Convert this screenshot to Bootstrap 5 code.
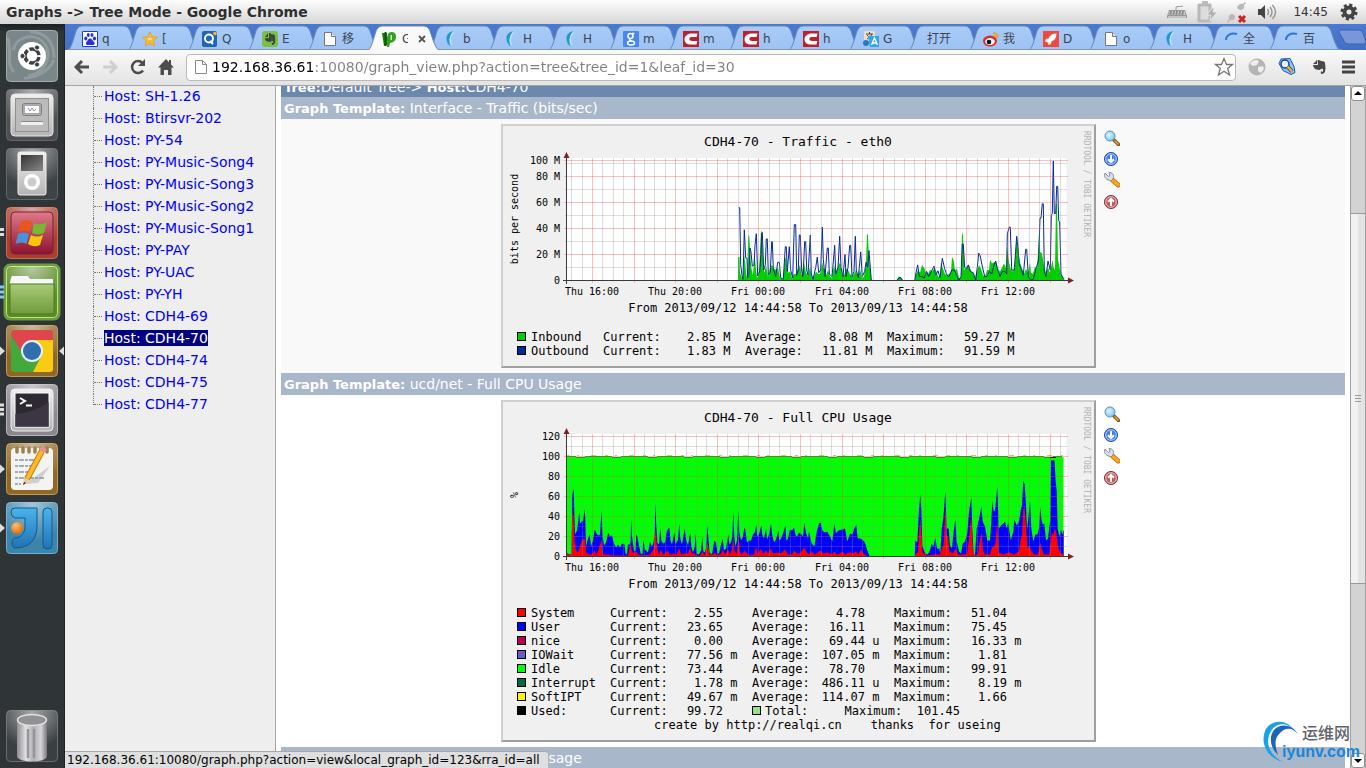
<!DOCTYPE html>
<html lang="en">
<head>
<meta charset="utf-8">
<meta name="viewport" content="width=device-width, initial-scale=1">
<title>Graphs -> Tree Mode</title>
<link href="https://cdn.jsdelivr.net/npm/bootstrap@5.3.0/dist/css/bootstrap.min.css" rel="stylesheet">
<script src="https://cdn.jsdelivr.net/npm/bootstrap@5.3.0/dist/js/bootstrap.bundle.min.js"></script>
<style>
  body { font-family: "DejaVu Sans", "Noto Sans CJK SC", sans-serif; font-size: 14px; line-height: 22px; color: #000; }
  button { border: 0; padding: 0; background: none; }
  svg { display: block; flex: none; }

  .desk-panel { height: 24px; background: linear-gradient(#fdfdfd, #d6d6d6); color: #333; padding: 0 8px 0 6px; }
  .desk-panel h1 { font-size: 14px; line-height: 23px; font-weight: 700; color: #2f2f2f; }
  .clock { font-size: 12px; line-height: 24px; }

  .launcher { width: 65px; background: linear-gradient(#1c2022, #2f3537 8px, #2f3537); border-right: 1px solid #1f2324; padding: 6px 0; gap: 7px; }

  .tab-strip { height: 26px; background: linear-gradient(#4a7ad0, #4470c4); padding-left: 2px; }
  .page-tab { position: relative; flex: 0 0 60px; height: 26px; padding: 3px 0 0 15px; gap: 4px; font-size: 12px; line-height: 22px; color: #3c4450; text-align: left; }
  .page-tab .tab-shape { position: absolute; left: 0; top: 0; z-index: 0; }
  .page-tab .tab-icon, .page-tab .tab-title, .page-tab .tab-close { position: relative; z-index: 2; }
  .tab-title { width: 12px; overflow: hidden; white-space: nowrap; }
  .tab-title.wide { width: 26px; }
  .tab-title.narrow { width: 6px; }
  .page-tab.active { z-index: 3; }

  .tool-bar { height: 36px; background: linear-gradient(#f9f9f9, #e3e3e3); border-bottom: 1px solid #a3a3a3; padding: 0 10px 0 9px; gap: 12px; }
  .omnibox { height: 27px; border: 1px solid #b9b9b9; border-radius: 4px; background: #fff; padding: 0 1px 0 7px; }
  .omnibox input { border: 0; outline: 0; padding: 0; font-size: 14px; line-height: 25px; color: transparent; background: linear-gradient(90deg, #000 103px, #808080 103px); -webkit-background-clip: text; background-clip: text; }

  .tree-pane { width: 211px; background: #eee; border-right: 1px solid #a5a5a5; padding-left: 28px; }
  .tree-pane li { height: 22px; line-height: 20px; padding-left: 11px; position: relative; }
  .tree-pane li::before { content: ""; position: absolute; left: 0; top: 0; bottom: 0; border-left: 1px dotted #777; }
  .tree-pane li:last-child::before { bottom: 11px; }
  .tree-pane li::after { content: ""; position: absolute; left: 1px; top: 10px; width: 8px; border-top: 1px dotted #777; }
  .tree-pane a { color: #00f; text-decoration: none; font-size: 14px; }
  .tree-pane a.picked { background: #000080; color: #fff; }

  .graph-pane { background: #fff; padding: 0 5px; }
  .bar-tree { height: 11px; background: #6d88ad; color: #fff; overflow: hidden; }
  .bar-tree div { height: 22px; line-height: 22px; margin-top: -10px; }
  .bar-template { height: 22px; background: #a9b7cb; color: #fff; line-height: 23px; }
  .bar-tree, .bar-template { padding: 0 3px; font-size: 14px; white-space: nowrap; }
  .bar-tree b, .bar-template b { font-size: 13px; }
  .graph-row { padding: 5px 0; }
  .graph-row.shade { background: #f9f9f9; }
  .rrd { width: 595px; background: #f0f0f0; border: 2px solid; border-color: #cfcfcf #9f9f9f #9f9f9f #cfcfcf; padding-bottom: 8px; }
  .rrd text { font-family: "DejaVu Sans Mono", monospace; fill: #000; }
  .t-title { font-size: 13px; }
  .t-span { font-size: 12px; }
  .t-axis { font-size: 10px; }
  .t-mark { font-size: 8px; }
  .rrd .t-mark { fill: #b2b2b2; }
  .key-table { font-family: "DejaVu Sans Mono", monospace; font-size: 12px; line-height: 14px; margin-left: 14px; table-layout: fixed; white-space: pre; color: #000; }
  .key-table td, .key-table th { padding: 0; height: 14px; font-weight: 400; }
  .credit { padding-left: 137px; }
  .swatch { display: block; width: 9px; height: 9px; border: 1px solid #000; }
  .w-sw { width: 14px; } .w-nm { width: 72px; } .w-nm2 { width: 79px; } .w-cap { width: 63px; } .w-num { width: 50px; } .w-unit { width: 29px; }
  .graph-tools { width: 29px; padding: 6px 5px 0 8px; gap: 5px; }

  .scroll-rail { width: 16px; background: #d3d3d3; border-left: 1px solid #a0a0a0; border-right: 1px solid #a0a0a0; }
  .scroll-rail button { height: 15px; background: #fff; border: 1px solid #8f8f8f; border-radius: 3px; display: flex; align-items: center; justify-content: center; }
  .rail-top { flex: 112 0 0; } .rail-thumb { flex: 370 0 0; background: linear-gradient(90deg, #f1f1f1 50%, #e3e3e3 50%); border-top: 1px solid #999; border-bottom: 1px solid #999; } .rail-end { flex: 170 0 0; }

  .status-bubble { position: absolute; left: 0; bottom: 0; height: 17px; background: #dfdfdf; border-top: 1px solid #a8a8a8; border-right: 1px solid #b5b5b5; border-radius: 0 4px 0 0; padding: 0 8px 0 2px; font-size: 12px; line-height: 16px; white-space: nowrap; }
  .site-mark { position: absolute; right: 6px; bottom: 3px; width: 98px; height: 46px; }
  .site-mark .cn { position: absolute; right: 10px; top: 3px; font: 500 16px/20px "Noto Sans CJK SC", sans-serif; color: #62646c; }
  .site-mark .en { position: absolute; right: 0; bottom: 3px; font: 700 16px/20px "Liberation Sans", sans-serif; color: #1787d8; }
</style>
</head>
<body class="vh-100 overflow-hidden d-flex flex-column">

<svg width="0" height="0" class="position-absolute" aria-hidden="true">
  <defs>
    <linearGradient id="gTab" x1="0" y1="0" x2="0" y2="1"><stop offset="0" stop-color="#a9cbf7"/><stop offset="1" stop-color="#9dc3f4"/></linearGradient>
    <radialGradient id="gGloss" cx=".5" cy="0" r=".75"><stop offset="0" stop-color="#fff" stop-opacity=".55"/><stop offset="1" stop-color="#fff" stop-opacity="0"/></radialGradient>
    <linearGradient id="gSilver" x1="0" y1="0" x2="0" y2="1"><stop offset="0" stop-color="#efefef"/><stop offset="1" stop-color="#b4b4b4"/></linearGradient>
    <linearGradient id="gScreen" x1="0" y1="0" x2="1" y2="1"><stop offset="0" stop-color="#333"/><stop offset="1" stop-color="#888"/></linearGradient>
    <linearGradient id="gCrim" x1="0" y1="0" x2="0" y2="1"><stop offset="0" stop-color="#e07a8a"/><stop offset="1" stop-color="#8d1230"/></linearGradient>
    <linearGradient id="gFold" x1="0" y1="0" x2="0" y2="1"><stop offset="0" stop-color="#a9cc77"/><stop offset="1" stop-color="#6f9a3c"/></linearGradient>
    <linearGradient id="gTube" x1="0" y1="0" x2="1" y2="0"><stop offset="0" stop-color="#8d8d92"/><stop offset=".3" stop-color="#e2e2e4"/><stop offset=".55" stop-color="#b0b0b4"/><stop offset=".8" stop-color="#d5d5d8"/><stop offset="1" stop-color="#77777d"/></linearGradient>
    <linearGradient id="gJI" x1="0" y1="0" x2="0" y2="1"><stop offset="0" stop-color="#4ab4ec"/><stop offset="1" stop-color="#2272b4"/></linearGradient>
    <radialGradient id="gOr" cx=".4" cy=".3" r=".7"><stop offset="0" stop-color="#ffc27a"/><stop offset="1" stop-color="#e06c00"/></radialGradient>
    <radialGradient id="gLens" cx=".4" cy=".4" r=".7"><stop offset="0" stop-color="#e4f8ff"/><stop offset="1" stop-color="#6fbdec"/></radialGradient>
    <g id="tile"><rect x="6.500" y=".5" width="51" height="51" rx="4"/></g>
    <g id="oneArrow"><path d="M0 21.500l5 4.500-5 4.500z" fill="#ddd"/></g>
    <g id="twoDots"><path d="M0 22.500h4M0 27.500h4" stroke="#ddd" stroke-width="3"/></g>
    <g id="icoPage"><path d="M2.500 1.500h7l4 4v9h-11z" fill="#fff" stroke="#777"/><path d="M9.500 1.500v4h4" fill="#eee" stroke="#777"/></g>
    <g id="icoFish"><path d="M10 0C6 1 3 4 3.500 8c0 3 1.500 5 4 7.500C6.500 12 5.500 9 7 6c.8-3 1.500-4 3-6z" fill="#1c98d4"/><path d="M10.500 1.500C7 5 6.500 9 8.500 14" stroke="#c8f0ff" fill="none"/></g>
    <g id="icoC"><path d="M0 0h16v16H0z" fill="#c1202b"/><path d="M14.500 2.500H9C4.500 2.500 1.500 5 1.500 8.200c0 3.300 2.500 5.300 6.500 5.300h5.500l.8-3.500H9.300c-2 0-3-.8-3-2 0-1.400 1.200-2 3-2h4.400z" fill="#fff"/></g>
    <g id="icoSpin"><path d="M3 9C3 4 8 1.500 14 3" stroke="#2b77d8" stroke-width="2" fill="none"/></g>
    <g id="toolZoom"><path d="M10 10l4.500 4.500" stroke="#8a5514" stroke-width="3.500" stroke-linecap="round"/><path d="M10.500 10.500l4 4" stroke="#f0a63c" stroke-width="1.500"/><circle cx="6" cy="6" r="5" fill="url(#gLens)" stroke="#5b93b8"/></g>
    <g id="toolDown"><circle cx="7" cy="8" r="6.500" fill="#3f7fee" stroke="#1f3fa8"/><circle cx="7" cy="8" r="5.300" fill="none" stroke="#bcd4ff"/><path d="M7 4v7M4 8.200l3 3 3-3" stroke="#fff" stroke-width="2" fill="none"/></g>
    <g id="toolWrench"><path d="M9 8.500l5 4.500" stroke="#b86a00" stroke-width="5" stroke-linecap="round"/><path d="M9 8.500l5 4.500" stroke="#ffa41c" stroke-width="3.500" stroke-linecap="round"/><path d="M1 1l3.500 3.500L6 3.500 5 .5c3 0 5 2 4.500 5L8 8.500C4 9 .5 6 .5 3.500z" fill="#dcdfe8" stroke="#85899b"/></g>
    <g id="toolUp"><circle cx="7" cy="9" r="6.500" fill="#c25a5c" stroke="#7d2d31"/><circle cx="7" cy="9" r="5.300" fill="none" stroke="#eec5c5"/><path d="M7 13V6M4 8.800l3-3 3 3" stroke="#fff" stroke-width="2" fill="none"/></g>
  </defs>
</svg>

<header class="desk-panel d-flex align-items-center">
  <h1 class="m-0">Graphs -&gt; Tree Mode - Google Chrome</h1>
  <div class="ms-auto d-flex align-items-center">
    <svg width="20" height="20" class="me-2"><path d="M9 8V5M9 5c3-1 4 0 7-1" stroke="#999" fill="none"/><path d="M2 8h16l2 6v2H0v-2z" fill="#999"/><path d="M2.500 9h15l1 4h-17z" fill="#ccc"/><path d="M3 10h14M2.500 12h15" stroke="#555" stroke-dasharray="2 1"/><path d="M1 15h18" stroke="#eee"/></svg>
    <svg width="22" height="24" class="me-2"><path d="M7 1h6v3h-6z" fill="#bbb"/><path d="M4 5h11v16H4z" fill="#dcdcdc" stroke="#b8b8b8" stroke-width="3" stroke-linejoin="round"/><path d="M17 8l-5 7h4l-1 6 7-9h-4l1-4z" fill="#b0b0b0" stroke="#eee" stroke-width=".8"/></svg>
    <svg width="24" height="24" class="me-2"><path d="M12 8c1-4 4-5 6-4l2-2 1 1-2 2c1 3-1 5-4 5z" fill="#b8b8b8"/><path d="M2 22l2-3c-1-3 1-5 4-5l2 2c0 4-2 5-5 4l-2 3z" fill="#b8b8b8"/><path d="M14 16l6 6M20 16l-6 6" stroke="#c22" stroke-width="3"/></svg>
    <svg width="20" height="20" class="me-2"><path d="M1 7h3l4-4v14l-4-4H1z" fill="#444"/><path d="M10.500 7q2 3 0 6M13 5q4 5 0 10M15.500 3q6 7 0 14" stroke="#999" stroke-width="1.500" fill="none"/></svg>
    <span class="clock mx-2">14:45</span>
    <svg width="18" height="18" class="ms-1"><circle cx="9" cy="9" r="7" fill="none" stroke="#444" stroke-width="3" stroke-dasharray="3 2.500"/><circle cx="9" cy="9" r="4.500" fill="none" stroke="#444" stroke-width="4"/></svg>
  </div>
</header>

<div class="d-flex flex-fill" style="min-height:0">
  <nav class="launcher d-flex flex-column flex-shrink-0" aria-label="Launcher">
    <button aria-label="Dash"><svg width="64" height="52"><g fill="#7b868a" stroke="#a3abae"><use href="#tile"/></g><path d="M13 20C18 4 38 2 46 16c6 12-2 28-18 30M8 8c4 18-2 26 6 34M54 30c-6 12-18 18-30 18M30 2c16 0 24 10 24 26" stroke="#b4bcbf" stroke-width="3" fill="none" opacity=".4"/><circle cx="32" cy="26" r="14" fill="#fff"/><circle cx="32" cy="26" r="7" fill="none" stroke="#3b4144" stroke-width="3.500" stroke-dasharray="12.600 2" stroke-dashoffset="-1"/><g fill="#3b4144" stroke="#fff"><circle cx="22.500" cy="26" r="2.600"/><circle cx="37" cy="17.500" r="2.600"/><circle cx="37" cy="34.500" r="2.600"/></g></svg></button>
    <button aria-label="Files"><svg width="64" height="52"><g fill="#4b4f51" stroke="#666"><use href="#tile"/></g><use href="#tile" fill="url(#gGloss)"/><rect x="11" y="5" width="42" height="42" rx="4" fill="url(#gSilver)" stroke="#e8e8e8"/><rect x="15.500" y="9.500" width="33" height="33" fill="#bbb" stroke="#909090"/><rect x="22.500" y="14.500" width="19" height="12" rx="2" fill="#aaa" stroke="#808080"/><path d="M25 17h14v7H25z" fill="#fff"/><path d="M28 19l2 3 2-3 2 3 2-2" stroke="#7d93b2" fill="none"/><path d="M21 34.500h22" stroke="#eee" stroke-width="3"/><path d="M21 32.500h22" stroke="#888"/></svg></button>
    <button aria-label="Music player"><svg width="64" height="52"><g fill="#3e4345" stroke="#666"><use href="#tile"/></g><use href="#tile" fill="url(#gGloss)"/><rect x="18" y="4" width="28" height="43" rx="2" fill="url(#gSilver)" stroke="#eee"/><path d="M21 7h22v16H21z" fill="url(#gScreen)"/><circle cx="32" cy="34" r="8" fill="#fff"/><circle cx="32" cy="34" r="4.500" fill="#ccc"/></svg></button>
    <button aria-label="Windows"><svg width="64" height="52"><g fill="#a8402f" stroke="#c86b5a"><use href="#tile"/></g><use href="#tile" fill="url(#gGloss)"/><use href="#twoDots"/><rect x="11" y="5" width="42" height="42" rx="4" fill="url(#gCrim)" stroke="#7a2030"/><path d="M21 15q5-4 11 0l-2.500 10q-6-3-11 0z" fill="#e8561c"/><path d="M34 16q6 3 13-1l-3 11q-6 3-12 0z" fill="#7ab72c"/><path d="M18 27q6-3 11 0l-2.500 10q-5-3-11 0z" fill="#4b93d8"/><path d="M31 28q6 3 12 0l-3 10q-6 3-12-1z" fill="#fcc40e"/></svg></button>
    <button aria-label="Home folder"><svg width="64" height="52" overflow="visible"><rect x="5" y="-1" width="54" height="54" rx="5" fill="none" stroke="#9be04a" stroke-width="3" opacity=".6"/><g fill="#5c8a2c" stroke="#b6f068"><use href="#tile"/></g><use href="#tile" fill="url(#gGloss)"/><path d="M0 21h4M0 26h4M0 31h4" stroke="#7fc8ee" stroke-width="3"/><path d="M11 12l1-2h16l2 3h23v9H10v-6z" fill="#f6f6f6"/><path d="M10 18h44v30H10z" fill="url(#gFold)" stroke="#4f7a22"/></svg></button>
    <button aria-label="Chrome"><svg width="64" height="52"><g fill="#8f6826" stroke="#c29a52"><use href="#tile"/></g><use href="#tile" fill="url(#gGloss)"/><use href="#oneArrow"/><path d="M64 21.500l-5 4.500 5 4.500z" fill="#ddd"/><rect x="11" y="5" width="42" height="42" rx="4" fill="#45a83c"/><path d="M14 5h36q3 0 3 3v8H32l-11 10L11 10q0-5 3-5z" fill="#e0444c"/><path d="M30 15h23v29q0 3-3 3H33l9-17z" fill="#f9cb12"/><circle cx="32" cy="26" r="11" fill="#eaf0f4"/><circle cx="32" cy="26" r="9" fill="#2f6fae"/></svg></button>
    <button aria-label="Terminal"><svg width="64" height="52"><g fill="#8b878f" stroke="#b8b4bc"><use href="#tile"/></g><use href="#tile" fill="url(#gGloss)"/><path d="M0 21h4M0 25.500h4M0 30h4" stroke="#ddd" stroke-width="3"/><rect x="11" y="5" width="42" height="42" rx="4" fill="url(#gSilver)" stroke="#eee"/><path d="M15 9h34v34H15z" fill="#2c2a30" stroke="#fff"/><path d="M15 30q20-2 34-12v25H15z" fill="#413c48" opacity=".7"/><path d="M20 14l5 3-5 3M26 21.500h6" stroke="#fff" stroke-width="2" fill="none"/></svg></button>
    <button aria-label="Text editor"><svg width="64" height="52"><g fill="#8f6826" stroke="#c29a52"><use href="#tile"/></g><use href="#tile" fill="url(#gGloss)"/><use href="#oneArrow"/><rect x="11" y="5" width="42" height="42" rx="4" fill="#f3f3f1"/><path d="M17 5v4M23 5v4M29 5v4M35 5v4M41 5v4M47 5v4" stroke="#9b8150" stroke-width="3.500" stroke-linecap="round"/><path d="M15 17h22M15 23h19M15 29h16M15 35h30M15 41h6" stroke="#8496ae" stroke-width="1.500" stroke-dasharray="3 1 5 1"/><path d="M25 41l25-18-12 17z" fill="#999" opacity=".4"/><path d="M27 36L42 8" stroke="#c77a06" stroke-width="6"/><path d="M27 36L42 8" stroke="#fbb92e" stroke-width="4"/><path d="M42 8l2-3.500" stroke="#e78e9a" stroke-width="6"/><path d="M24 35l6 3-7 4z" fill="#eac99a"/><path d="M23 42l1-3 2 1z" fill="#222"/></svg></button>
    <button aria-label="IntelliJ IDEA"><svg width="64" height="52"><g fill="#3d84ab" stroke="#6fb2d6"><use href="#tile"/></g><use href="#tile" fill="url(#gGloss)"/><use href="#oneArrow"/><path d="M11 10q0-4 4-4h22v18c0 14-8 22-22 22-4 0-4-10 0-10 6 0 10-5 10-12v-8H15q-4-1-4-6z" fill="url(#gJI)" stroke="#0d5a8c"/><rect x="43" y="6" width="9" height="41" rx="4" fill="url(#gJI)" stroke="#0d5a8c"/><circle cx="17" cy="26" r="6" fill="url(#gOr)"/></svg></button>
    <button class="mt-auto" aria-label="Trash"><svg width="64" height="52"><g fill="#3a3f41" stroke="#6c6c6c"><use href="#tile"/></g><use href="#tile" fill="url(#gGloss)"/><path d="M17 10v37c3 6 27 6 30 0V10z" fill="url(#gTube)"/><path d="M28 19v29M34 19v29" stroke="#95959b" stroke-width="2.500"/><ellipse cx="32" cy="10" rx="14.500" ry="5.500" fill="#929295" stroke="#e4e4e6" stroke-width="1.500"/></svg></button>
  </nav>

  <main class="d-flex flex-column flex-fill position-relative" style="min-width:0">
    <div class="tab-strip d-flex" id="tabs" role="tablist"></div>

    <div class="tool-bar d-flex align-items-center">
      <button aria-label="Back"><svg width="16" height="16"><path d="M15 8H3M8 2L2 8l6 6" stroke="#4d4d4d" stroke-width="3" fill="none"/></svg></button>
      <button aria-label="Forward"><svg width="16" height="16"><path d="M1 8h12M8 2l6 6-6 6" stroke="#cfcfcf" stroke-width="3" fill="none"/></svg></button>
      <button aria-label="Reload"><svg width="16" height="16"><path d="M13 11.500A6 6 0 1 1 12.500 4" stroke="#4d4d4d" stroke-width="2.500" fill="none"/><path d="M15 0v7H8z" fill="#4d4d4d"/></svg></button>
      <button aria-label="Home"><svg width="16" height="16"><path d="M8 0L0 8.500h2.500V16H6v-5h4v5h3.500V8.500H16l-3-3V1h-2v2.300z" fill="#4d4d4d"/></svg></button>
      <div class="omnibox d-flex align-items-center flex-fill">
        <svg width="14" height="16" class="me-1"><path d="M1.500 1.500h7l4 4v9h-11z" fill="#fff" stroke="#888"/><path d="M8.500 1.500v4h4" fill="none" stroke="#888"/></svg>
        <input class="flex-fill" aria-label="Address" value="192.168.36.61:10080/graph_view.php?action=tree&amp;tree_id=1&amp;leaf_id=30">
        <button aria-label="Bookmark"><svg width="20" height="20"><path d="M10 1.500l2.500 6H18.500l-4.800 4 1.900 6.500L10 14.300 4.400 18l1.900-6.500-4.800-4h6z" fill="#fff" stroke="#777" stroke-width="1.300"/></svg></button>
      </div>
      <button aria-label="Proxy"><svg width="18" height="18"><circle cx="9" cy="9" r="8.500" fill="#b5b5b5"/><path d="M4 3q4-2 7 0l-2 4-4 1-3-2zM10 9l5-1 1 3-3 4-3-2z" fill="#eee"/></svg></button>
      <button aria-label="Inspector"><svg width="18" height="18"><path d="M3 1l9-.5 4 8 1 6-4 2-8-4-4-7z" fill="#8cc4f6" stroke="#2257a8"/><circle cx="7" cy="6" r="4" fill="#dff2ff" stroke="#1f3f90" stroke-width="1.500"/><path d="M9.500 8.500l4.500 5" stroke="#1f3f90" stroke-width="4"/><path d="M9.500 8.500l4.500 5" stroke="#f2b12c" stroke-width="2.500"/></svg></button>
      <button aria-label="Evernote" class="mx-1"><svg width="14" height="16"><path d="M1 5l4-4v4zM5.500 1q3 0 3.500 1 4 0 4 2 1 5 0 9-1 2-4 2-1-4 2-2V10q-2-1-3 1-3 0-5-1-2-2-2-4h5z" fill="#4a4a4a"/></svg></button>
      <button aria-label="Menu"><svg width="14" height="14"><path d="M0 2h13M0 7h13M0 12h13" stroke="#444" stroke-width="3"/></svg></button>
    </div>

    <div class="d-flex flex-fill overflow-hidden">
      <ul class="tree-pane list-unstyled m-0 flex-shrink-0" id="tree"></ul>

      <section class="graph-pane flex-fill overflow-hidden">
        <div class="bar-tree"><div><b>Tree:</b>Default Tree-&gt; <b>Host:</b>CDH4-70</div></div>
        <div class="bar-template"><b>Graph Template:</b> Interface - Traffic (bits/sec)</div>
        <div class="graph-row shade d-flex justify-content-center">
          <figure class="rrd m-0">
            <svg id="plotTraffic" width="591" height="204" role="img" aria-label="CDH4-70 traffic on eth0"></svg>
            <table class="key-table" id="keyTraffic"></table>
          </figure>
          <div class="graph-tools d-flex flex-column"></div>
        </div>
        <div class="bar-template"><b>Graph Template:</b> ucd/net - Full CPU Usage</div>
        <div class="graph-row d-flex justify-content-center">
          <figure class="rrd m-0">
            <svg id="plotCpu" width="591" height="204" role="img" aria-label="CDH4-70 CPU usage"></svg>
            <table class="key-table" id="keyCpu"></table>
          </figure>
          <div class="graph-tools d-flex flex-column"></div>
        </div>
        <div class="bar-template"><b>Graph Template:</b> ucd/net - Memory Usage</div>
      </section>

      <div class="scroll-rail d-flex flex-column flex-shrink-0" aria-label="Scroll bar">
        <button aria-label="Scroll up"><svg width="8" height="4"><path d="M0 4l4-4 4 4z"/></svg></button>
        <div class="rail-top"></div>
        <div class="rail-thumb d-flex align-items-center justify-content-center"><svg width="6" height="7"><path d="M0 .5h6M0 3.500h6M0 6.500h6" stroke="#999"/></svg></div>
        <div class="rail-end"></div>
        <button aria-label="Scroll down"><svg width="8" height="4"><path d="M0 0l4 4 4-4z"/></svg></button>
      </div>
    </div>

    <div class="status-bubble">192.168.36.61:10080/graph.php?action=view&amp;local_graph_id=123&amp;rra_id=all</div>
    <div class="site-mark">
      <svg width="98" height="46"><path d="M33 13C26-1 8 0 3 12c-5 13 3 28 19 31C8 37 3 25 8 14 13 3 26 2 33 13z" fill="#18a0e8"/><path d="M36 15C30 5 18 4 12 11c-6 8-3 18 4 25-3-9-4-16 1-21 6-7 13-7 19 0z" fill="#1a66b8"/></svg>
      <span class="cn">运维网</span><span class="en">iyunv.com</span>
    </div>
  </main>
</div>

<script>
/* ---- browser tabs ---- */
const icons = {
  paw: '<path d="M0 0h16v16H0z" fill="#fff"/><path d="M.5.5h15v15H.5z" fill="none" stroke="#2932e1"/><g fill="#2932e1"><ellipse cx="3.800" cy="7.500" rx="1.600" ry="2"/><ellipse cx="6.300" cy="4" rx="1.500" ry="2"/><ellipse cx="10" cy="4" rx="1.500" ry="2"/><ellipse cx="12.500" cy="7.500" rx="1.600" ry="2"/><path d="M8 7.500c2 0 2.500 2 4 3.500s.5 3-1.500 3-4 .1-5 0-2.500-1.500-1-3S6 7.500 8 7.500z"/></g>',
  star: '<path d="M8 1l2.300 4.700 5.200.6-3.800 3.600 1 5.100L8 12.500 3.300 15l1-5.100L.5 6.300l5.200-.6z" fill="#f8b93a" stroke="#e09a20" stroke-width=".7"/><path d="M6 8h4" stroke="#fff"/>',
  q: '<rect width="15" height="16" rx="2" fill="#1c66b4"/><circle cx="7" cy="7.500" r="4" fill="none" stroke="#fff" stroke-width="2"/><path d="M8 10l3 3" stroke="#fff" stroke-width="2"/><circle cx="13" cy="2.500" r="1.800" fill="#ffb52e"/>',
  ever: '<rect width="16" height="16" rx="3" fill="#7ac043"/><path d="M3 6l3-4v4zM7 2q2 0 2 1 4 0 4 2 .6 4 0 7-1 2-3 2-1-3 1-2v-2q-2-1-2 1-3 0-5-1-1-1-1-3h4z" fill="#3d4a3d"/>',
  page: '<use href="#icoPage"/>',
  cacti: '<path d="M0 2h5v12l-3 1z" fill="#177a12"/><path d="M5 9q0-8 4.500-8T14 6q0 5-6 6l-1 4H5z" fill="#2fa01f"/><path d="M8.500 4h1.500v5H8.500z" fill="#d8f0d0"/><path d="M3.500 1v14" stroke="#0d5a0a" stroke-width="2"/>',
  fish: '<use href="#icoFish"/>',
  g: '<rect width="16" height="16" rx="1" fill="#4a85f0"/><g fill="none" stroke="#fff" stroke-width="1.500"><circle cx="7.500" cy="5" r="2.500"/><ellipse cx="8" cy="12" rx="3.500" ry="2"/><path d="M9 2.500h2.500M7 8q-1 1 1.500 2"/></g>',
  c: '<use href="#icoC"/>',
  trans: '<rect x="1" width="11" height="11" rx="2" fill="#e8e2c8"/><path d="M3 3h7M6.500 1v2M4 8q4-2 5-5M4 4l5 5" stroke="#444" fill="none"/><path d="M5 5h11v11H7z" fill="#36a3ea"/><path d="M8.500 14l3-7 3 7M9.500 12h4" stroke="#fff" stroke-width="1.300" fill="none"/><circle cx="3" cy="12" r="3" fill="#2a78c8"/>',
  none: '',
  weibo: '<ellipse cx="7" cy="10" rx="7" ry="5.500" fill="#e02a2a"/><ellipse cx="7" cy="10.500" rx="4.800" ry="3.600" fill="#fff"/><circle cx="6" cy="11" r="2.300" fill="#111"/><path d="M10 2q5 0 5 5M10.500 4.500q2.500 0 2.500 2.500" stroke="#f09a28" stroke-width="1.500" fill="none"/>',
  rocket: '<path d="M0 0h16v16H0z" fill="#f04a3e"/><path d="M13.500 2.500q-6 0-8 5L3 8l-1 2.500 2 .5 1 1 .5 2L8 13l.5-2.500q5-2 5-8z" fill="#fff"/>',
  spin: '<use href="#icoSpin"/>'
};
const tabs = [['paw','q'],['star','['],['q','Q'],['ever','E'],['page','移'],['cacti','G'],['fish','b'],['fish','H'],['fish','H'],['g','m'],['c','m'],['c','h'],['c','h'],['trans','G'],['none','打开'],['weibo','我'],['rocket','D'],['page','o'],['fish','H'],['spin','全'],['spin','百']];
const shape = on => `<svg class="tab-shape" width="74" height="26"><path d="M1 26.500C5 24 8 8 10 5q2-3 5-3h42q3 0 5 3c2 3 5 18 10 21.500" fill="${on ? '#f9f9f9' : 'url(#gTab)'}" stroke="#6689b8"/>${on ? '' : '<path d="M0 25.500h74" stroke="#7e96b5"/>'}</svg>`;
document.getElementById('tabs').innerHTML = tabs.map(([ico, title], i) => {
  const on = i === 5;
  return `<button role="tab" aria-selected="${on}" class="page-tab d-flex align-items-center${on ? ' active' : ''}">${shape(on)}` +
    (ico === 'none' ? '' : `<svg class="tab-icon" width="16" height="16">${icons[ico]}</svg>`) +
    `<span class="tab-title${ico === 'none' ? ' wide ms-1' : on ? ' narrow' : ''}">${title}</span>` +
    (on ? '<svg class="tab-close ms-1" width="12" height="10"><path d="M3 2l6 6M9 2L3 8" stroke="#555" stroke-width="1.800"/></svg>' : '') + '</button>';
}).join('') + '<button aria-label="New tab" class="ms-2"><svg width="30" height="26"><path d="M4 6h19q3 0 4 3l3 9q0 2-2 2H12q-3 0-4-3L3 8q0-2 1-2z" fill="#7797d8" stroke="#3f62ae"/></svg></button>';

/* ---- host tree ---- */
document.getElementById('tree').innerHTML = ['SH-1.26','Btirsvr-202','PY-54','PY-Music-Song4','PY-Music-Song3','PY-Music-Song2','PY-Music-Song1','PY-PAY','PY-UAC','PY-YH','CDH4-69','CDH4-70','CDH4-74','CDH4-75','CDH4-77']
  .map(h => `<li><a href="#"${h === 'CDH4-70' ? ' class="picked"' : ''}>Host: ${h}</a></li>`).join('');

/* ---- graph tool icons ---- */
document.querySelectorAll('.graph-tools').forEach(el => {
  el.innerHTML = [['toolZoom','Zoom'],['toolDown','Export'],['toolWrench','Source'],['toolUp','Top']]
    .map(([id, name]) => `<a href="#" aria-label="${name}"><svg width="16" height="16"><use href="#${id}"/></svg></a>`).join('');
});

/* ---- plots: sample lists are "x:value", the time axis starts at 566.5 ---- */
const X = x => x - 503, BASE = 154.5;
const pts = (s, k) => s.trim().split(/\s+/).map(p => { const [x, v] = p.split(':').map(Number); return [X(x), BASE - v * k]; });
const line = (s, k) => 'M' + pts(s, k).map(p => p[0].toFixed(1) + ' ' + p[1].toFixed(1)).join('L');
const area = (s, k) => { const a = pts(s, k); return `M${a[0][0]} ${BASE}L` + a.map(p => p[0].toFixed(1) + ' ' + p[1].toFixed(1)).join('L') + `L${a[a.length - 1][0]} ${BASE}z`; };

function frame(title, unit, body, major, minor) {
  let g = `<path d="M63.500 32h500v122.500h-500z" fill="#fff"/>${body}`;
  let red = '', grey = '';
  for (let i = -2; i < 46; i++) {
    const x = Math.round(89 + i * 10.4) + .5;
    if (i % 4 === 0) red += `M${x} 32V157`; else grey += `M${x} 32V155.500`;
  }
  major.forEach(([y]) => red += `M61 ${y}H565`);
  minor.forEach(y => grey += `M62 ${y}H564`);
  g += `<path d="${grey}" stroke="#8f8f8f" stroke-opacity=".3"/><path d="${red}" stroke="#e64c4c" stroke-opacity=".35"/>`;
  g += `<path d="M63.500 29V158M60 154.500H569" stroke="#3a3a3a"/><path d="M60.500 32l3-6 3 6zM565 151.500l6 3-6 3z" fill="#802020"/>`;
  g += major.map(([y, t]) => `<text class="t-axis" x="57" y="${y + 3}" text-anchor="end">${t}</text>`).join('');
  ['Thu 16:00','Thu 20:00','Fri 00:00','Fri 04:00','Fri 08:00','Fri 12:00'].forEach((t, i) =>
    g += `<text class="t-axis" x="${Math.round(89 + i * 83.200)}" y="169" text-anchor="middle">${t}</text>`);
  g += `<text class="t-title" x="295" y="20" text-anchor="middle">${title}</text>`;
  g += `<text class="t-span" x="295" y="186" text-anchor="middle">From 2013/09/12 14:44:58 To 2013/09/13 14:44:58</text>`;
  g += `<text class="t-axis" transform="rotate(-90 15 93)" x="15" y="93" text-anchor="middle">${unit}</text>`;
  g += `<text class="t-mark" transform="translate(581 5) rotate(90)">RRDTOOL / TOBI OETIKER</text>`;
  return g;
}

const outbound = `738.700:56 739.700:56 740.700:12.500 742:4 743:1 744.300:39 745.700:17.500 747:17 747.700:2 748.700:3 750:25 751:22 752.300:11 754:12 755:27 756.300:36 757.700:3.500 759.700:7 761:20 761.700:36 762.300:37 763.700:8 765.300:12 766.300:32 767.300:32 768.300:4.500 770.300:6 771.700:30 772.300:30 773.300:9.500 775.700:3 777.700:14 779.300:14 780.700:2 783.300:1 785.300:26 786.300:26 787.300:7 789.300:26 790.700:8 792.700:2 794.300:43 795.700:43 796.700:4 798.300:8 799.300:35 800.300:35 801.700:7 803:3 804.700:30 805.700:30 806.700:8 808:4 810.300:35 811.300:5 813:1 815.700:10 817.300:18 818.700:6 820.700:8 822.300:41 823.300:16 825:3 827.300:25 828.300:25 829.300:5 832:3 834.700:27 835.700:5 838:10 839.700:34 841:10 843:3 845:20 846:3 848:10 849.700:27 850.700:27 852:3 854:7 855.300:34 856.300:8 858.300:2 860.700:22 862.300:3 864.700:7 866:14 867.700:10 869:23 870.300:10 871.300:0 896.700:0 899:2 901:2 902.700:0 914.700:0 916:6 917.700:12 919.300:3 922:3 924.300:2 926.700:7 928.700:3 930.700:6 934:11 935.700:4 938:7.500 940:2 942.300:17 944.700:9 947:4 949:3 951.700:8 954.300:8 956.700:4 958.700:0 961:3 962.300:28 963.300:28 964.700:10 966.700:9 968.300:12 970.300:7 973.300:6 975.700:0 977.300:10 978.700:21 980:19.500 982:12 984.700:3 987:3 989.300:7 991.700:5 994:12 995.700:15 997.700:8 1000:3 1002.300:7 1005:7 1006.700:5 1007.300:36 1009.300:41 1010.300:41 1011.700:8 1014.300:8 1016.700:34 1018:26 1019:13 1021.300:9 1023.300:4 1025.700:24 1026.700:24 1028.300:3 1030.700:0 1033.300:1 1035.700:8 1038.700:16 1040:48 1041:48 1042.300:59 1043.300:59 1044.300:7 1046:3 1048:15 1050.300:8 1051.300:50 1052.300:51.500 1053.300:92 1054.300:51.500 1055.700:51.500 1056.700:72.500 1057.700:72.500 1058.700:46 1059.700:45 1061:5 1063.300:1.500 1064.300:1`;
const inbound = `738:18 739.500:18 740:6 742:2 743:1 744.500:20 746:7 747:2 748.300:35 749.300:34 750.300:20 751.500:9 753:4 754.500:20 756:9 757:2 759:5 761:39 762:36 763.500:10 764.500:6 766:12 768:3 770:10 772:12 774:9 776:8 778:10 780:2 783:1 785:18 786:16 788:6 790:7 792:2 794:5 796:5 798:9 800:12 801.500:4 804:14 806:6 808:3 810:11 812:2 814:3 816:7 818:5 820:5 822:14 824:9 826:4 828:8 830:3 832:2 834:12 836:5 838:11 840:14 842:5 844:4 846:9 848:8 850:5 852:3 854:5 856:8 858:2 860:9 862:2 864:3 866:13 867:36 868:35 869:16 870:10 871.500:0 896.700:0 898.500:3 901:2.500 902.700:0 914.700:0 916:5 918:8 920:6 922:12 924:10 926:6 928:5 930:8 932:7 934:9 936:8 938:3 940:3 941:14 943:9 945:5 947:4 949:5 951:6 952:18 953.500:16 955:8 957:9 959:2 961:2 962:38 963:34 964.500:8 967:11 969:12 971:7 973:6 975:2 977:8 979:12 981:9 983:4 985:3 987:8 989:8 990:16 992:13 994:14 996:14 998:9 1000:7 1002:10 1004:13 1006:10 1007:26 1009:14 1011:8 1013:7 1015:13 1016.500:34 1018:24 1020:14 1022:9 1024:5 1026:9 1028:6 1030:14 1031:6 1033:5 1035:11 1037:8 1039:36 1040:22 1042:21 1044:11 1046:6 1048:10 1050:6 1052.500:16 1053.500:10 1055:8 1056:59 1057:59 1058:16 1060:8 1062:3 1064:1`;
document.getElementById('plotTraffic').innerHTML = frame('CDH4-70 - Traffic - eth0', 'bits per second',
  `<path d="${area(inbound, 1.3)}" fill="#00cf00"/><path d="${line(outbound, 1.3)}" fill="none" stroke="#002a97"/>`,
  [[34.5,'100 M'],[50.5,'80 M'],[76.5,'60 M'],[102.5,'40 M'],[128.5,'20 M'],[154.5,'0']], [37.5, 63.5, 89.5, 115.5, 141.5]);

const user = `566.500:5 567.500:3 570:2 571.500:2 572.300:62 573.700:68 574.300:45 575:22 577:26 578.300:36 579.300:45 580:33 582:35 583.300:36 584.500:48 585.300:38 586:10 588:18 589.700:22 591:10 593:16 594.700:27 596:24 598:21 600:22 601.500:46 602.700:20 604:11 606:14 608.300:24 610:20 612:21 614:13 616:9 618:12 620:9 622:13 624.500:12 625.500:3 627:2 628:12 629.700:12 630.500:14 631.300:38 632:20 634:6 635.500:5 636.300:22 637.300:20 639:11 640.700:3 642.500:2 643.300:17 645:7 648:4 650:15 652:10 653.500:14 654.700:22 655.300:53 656.300:30 657.300:14 659:12 660.300:29 661.300:16 663:13 665:14 667:26 669.300:29 670.500:16 672:12 674.300:24 675.500:12 678:17 679.300:33 680.300:18 682:12 684.700:28 686:17 688:11 690.300:24 691.300:10 693:4 694.700:10 695.700:23 696.700:3 699:2 701:6 702.300:20 703.300:5 705:4 706:8 707.300:31 708.300:20 709.500:4 712:2 714.300:16 716:14 717.500:3 719:3 721:12 722.700:18 724:6 726:8 728.300:22 729.500:12 731:14 732.300:20 733.300:45 734.300:20 735.500:10 737:16 738.300:46 739.300:24 741:16 743:20 744.300:29 745.300:27 747:14 749:16 751:16 753:22 754.700:24 756.300:32 757.300:20 759:22 761.300:31 762.300:22 764:18 766:28 767:17 769:22 771:33 772.300:21 774:14 776:17 778.300:26 779.300:16 781:18 783:23 785.300:31 786.300:16 788:18 790:27 792:26 794:29 795.700:21 797:20 799:24 801.500:22 803:20 804.300:34 806:24 808:18 809:25 811.700:13 814.300:10 816.700:25 819:33 820.700:34 822.300:26 825:24 827.300:25 830:20 832.300:15 834.300:33 836:23 838.300:26 842.300:27 845:28 847.300:15 850:23 852.300:22 854.300:28 856.300:32 857.700:18 860:18 862.300:17 865:14 867.300:6 869.700:0 914.700:0 915.300:16 917.300:14 919:48 920.300:62 921.300:48 922.300:11 925:3 927.700:2 930:6 931.700:13 933.300:10 935.300:19 937:8 939.300:8 940.300:3 941.700:28 943.300:38 945.300:65 946.700:28 948.700:28 950:11 952:8 954:28 955.300:37 956.700:15 959:5 961:3 962.700:13 965:15 967.300:23 969:45 971.300:59 972.300:28 973.700:1 975:2 976.700:28 979:37 981.300:50 982.700:35 985:30 987.300:16 990:16 991.300:35 992.300:56 993.700:45 995:46 997.300:70 998.700:28 1001:31 1003.300:33 1005:35 1006.700:28 1008.300:34 1010.700:16 1013.300:25 1014.300:37 1016.700:31 1019:35 1020.700:46 1022:52 1023.300:76 1024.700:72 1026:52 1027:27 1028.300:38 1030:56 1031.300:28 1033.300:15 1035.300:22 1037.300:22 1039:28 1040.300:50 1041.300:38 1042.700:32 1044.300:33 1046:16 1048:18 1049.300:30 1050.300:35 1051:96 1054.500:96 1055.700:75 1056.700:66 1057.700:28 1059.300:20 1061:27 1062.300:22 1063.700:27`;
const system = `566.500:4 568:2 571.500:2 572.300:48 573.700:38 574.500:16 576:6 578:4 580:10 582:16 584:18 585:17 586:4 589:2 592:2 594.500:6 596:2 598:5 601.500:17 603:2 608:2 613:1 628:1 630.500:14 631.500:7 633:3 636.500:5 638:2 644:1 650:2 653.500:7 655.300:27 657.300:8 659:2 661:7 663:2 665:3 667.500:6 670:2 674:3 676:1 679.300:8 681:2 684:3 688:3 690.300:9 692:2 694:4 696:1 700:1 702.500:5 705:1 707.500:14 709.500:2 713:2 715:4 717:1 721:3 723:7 725:2 728:7 730:2 732:7 733.300:20 734.500:5 737:3 738.300:22 740:4 742:2 744.300:6 747:3 750:1 754:2 756:10 757.500:2 761:8 763:2 766:6 768:3 771:8 773:3 778:4 781:3 785:7 788:2 792:2 794:6 797:3 800:3 804:9 807:4 809:2 811:5 815:2 820.500:6 823:3 828:4 832:2 834.500:5 837:2 840:3 842.500:5 845:2 849:4 853:3 856:5 858:2 861:7 863:3 866:1 869:0 914.700:0 916:3 918:4 919:24 920.300:38 921.300:24 922.500:4 926:1 935:2 940:2 942:9 943:10 944:16 945.300:51 946.700:22 948.300:18 949.500:5 953:3 955.500:8 958:2 963:2 967:2 969:18 971.300:42 972.700:10 974:1 978:2 979.500:14 981.500:24 983:6 985:2 990:2 992:9 994:10 995.500:14 997.300:35 998.700:4 1003:2 1009:4 1014:2 1019:5 1020.500:16 1022:21 1023.300:47 1024.500:50 1026:30 1027.500:8 1029:11 1031:6 1034:2 1038:2 1040.300:14 1042:7 1044:2 1049:2 1050.500:13 1052:24 1053.300:21 1054.700:28 1056:25 1058:10 1060:4 1063.700:2`;
let fringe = '';
for (let x = 64; x < 552; x += 9) fringe += `M${x} ${x % 4 === 1 ? 55.5 : 54.5}h9`;
document.getElementById('plotCpu').innerHTML = frame('CDH4-70 - Full CPU Usage', '%',
  `<path d="M63.500 55H560.500V154.500H63.500z" fill="#00ff00"/><path d="${area(user, 1)}" fill="#0000ff"/><path d="${area(system, 1)}" fill="#ff0000"/>
   <path d="M64 53.500H560" stroke="#a0e060" stroke-dasharray="3 7 2 12 5 9"/><path d="${fringe}" stroke="#3a8a2a" fill="none"/><path d="M547 55.500h6" stroke="#111"/>`,
  [[34.5,'120'],[54.5,'100'],[74.5,'80'],[94.5,'60'],[114.5,'40'],[134.5,'20'],[154.5,'0']], [44.5, 64.5, 84.5, 104.5, 124.5, 144.5]);

/* ---- legends ---- */
const box = c => `<span class="swatch" style="background:${c}"></span>`;
const cell = s => { const [n, u = ''] = s.split(' '); return `<td class="text-end">${n}</td><td>${u && ' ' + u}</td>`; };
const row = ([c, name, cur, avg, max]) => `<tr><td>${box(c)}</td><th scope="row">${name}</th><td>Current:</td>${cell(cur)}<td>Average:</td>${cell(avg)}<td>Maximum:</td>${cell(max)}</tr>`;
const cols = nm => `<colgroup><col class="w-sw"><col class="${nm}">${'<col class="w-cap"><col class="w-num"><col class="w-unit">'.repeat(3)}</colgroup>`;
document.getElementById('keyTraffic').innerHTML = cols('w-nm') + [
  ['#00cf00','Inbound','2.85 M','8.08 M','59.27 M'],
  ['#002a97','Outbound','1.83 M','11.81 M','91.59 M']].map(row).join('');
document.getElementById('keyCpu').innerHTML = cols('w-nm2') + [
  ['#ff0000','System','2.55','4.78','51.04'],
  ['#0000ff','User','23.65','16.11','75.45'],
  ['#b8004e','nice','0.00','69.44 u','16.33 m'],
  ['#6a5acd','IOWait','77.56 m','107.05 m','1.81'],
  ['#00ff00','Idle','73.44','78.70','99.91'],
  ['#006847','Interrupt','1.78 m','486.11 u','8.19 m'],
  ['#fff200','SoftIPT','49.67 m','114.07 m','1.66']].map(row).join('') +
  `<tr><td>${box('#000')}</td><th scope="row">Used:</th><td>Current:</td>${cell('99.72')}<td colspan="6"><div class="d-flex align-items-center">${box('#8fe388')}<span class="ms-1">Total:     Maximum:  101.45</span></div></td></tr>` +
  `<tr><td colspan="11"><div class="credit">create by http://realqi.cn    thanks  for useing</div></td></tr>`;
</script>
</body>
</html>
